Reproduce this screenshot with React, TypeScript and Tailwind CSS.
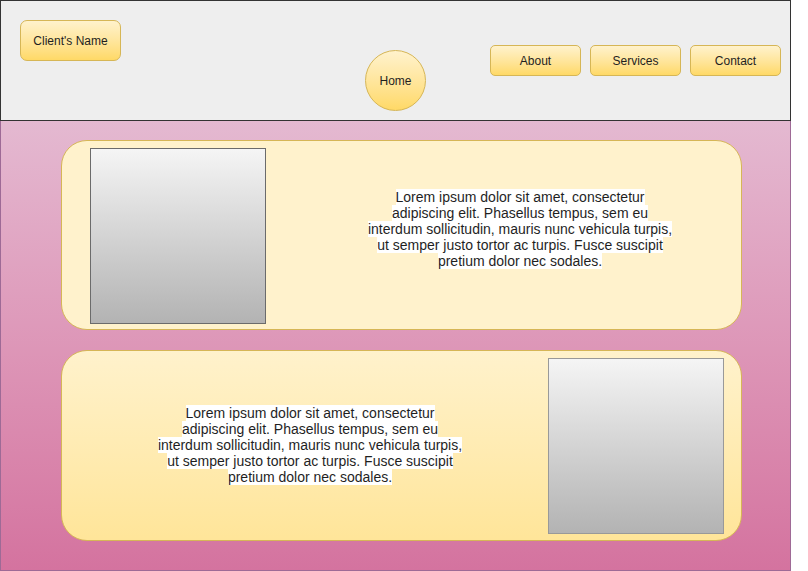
const lorem = [
  'Lorem ipsum dolor sit amet, consectetur',
  'adipiscing elit. Phasellus tempus, sem eu',
  'interdum sollicitudin, mauris nunc vehicula turpis,',
  'ut semper justo tortor ac turpis. Fusce suscipit',
  'pretium dolor nec sodales.',
];

function Lorem() {
  return (
    <div className="w-[320px] text-center text-[14px] leading-[16px] text-[#1f1f1f] whitespace-nowrap">
      {lorem.map((line, i) => (
        <div key={i}>
          <span className="bg-white">{line}</span>
        </div>
      ))}
    </div>
  );
}

function NavButton({ label }: { label: string }) {
  return (
    <button className="w-[91px] h-[31px] rounded-[5px] border border-[#d6b656] bg-gradient-to-b from-[#fff2cc] to-[#ffd966] text-[12px] text-[#1f1f1f] flex items-center justify-center">
      {label}
    </button>
  );
}

function Placeholder({ border }: { border: string }) {
  return (
    <div
      className={`w-[176px] h-[176px] border bg-gradient-to-b from-[#f5f5f5] to-[#b3b3b3] ${border}`}
    />
  );
}

export default function App() {
  return (
    <div className="w-[791px] h-[571px] flex flex-col font-['Liberation_Sans',Arial,sans-serif]">
      <header className="h-[121px] shrink-0 border border-[#333333] bg-[#eeeeee] flex items-start">
        <button className="ml-[19px] mt-[19px] w-[101px] h-[41px] rounded-[7px] border border-[#d6b656] bg-gradient-to-b from-[#fff2cc] to-[#ffd966] text-[12px] text-[#1f1f1f] flex items-center justify-center">
          Client's Name
        </button>
        <button className="ml-[244px] mt-[49px] w-[61px] h-[61px] rounded-full border border-[#d6b656] bg-gradient-to-b from-[#fff2cc] to-[#ffd966] text-[12px] text-[#1f1f1f] flex items-center justify-center">
          Home
        </button>
        <nav className="ml-[64px] mt-[44px] flex gap-[9px]">
          <NavButton label="About" />
          <NavButton label="Services" />
          <NavButton label="Contact" />
        </nav>
      </header>

      <main className="flex-1 border-x border-b border-t-0 border-[#9e6a96] bg-gradient-to-b from-[#e4b9d1] to-[#d4739f] pl-[60px] pt-[19px] flex flex-col gap-[20px]">
        <section className="w-[681px] h-[190px] rounded-[26px] border border-[#d6b656] bg-[#fff2cc] flex items-center">
          <div className="ml-[28px] self-start mt-[7px]">
            <Placeholder border="border-[#6b6b6b]" />
          </div>
          <div className="ml-[94px] -mt-[12px]">
            <Lorem />
          </div>
        </section>

        <section className="w-[681px] h-[191px] rounded-[26px] border border-[#d6b656] bg-gradient-to-b from-[#fff2cc] to-[#ffe599] flex items-center">
          <div className="ml-[88px] -mt-[2px]">
            <Lorem />
          </div>
          <div className="ml-auto mr-[17px] self-start mt-[7px]">
            <Placeholder border="border-[#999999]" />
          </div>
        </section>
      </main>
    </div>
  );
}
